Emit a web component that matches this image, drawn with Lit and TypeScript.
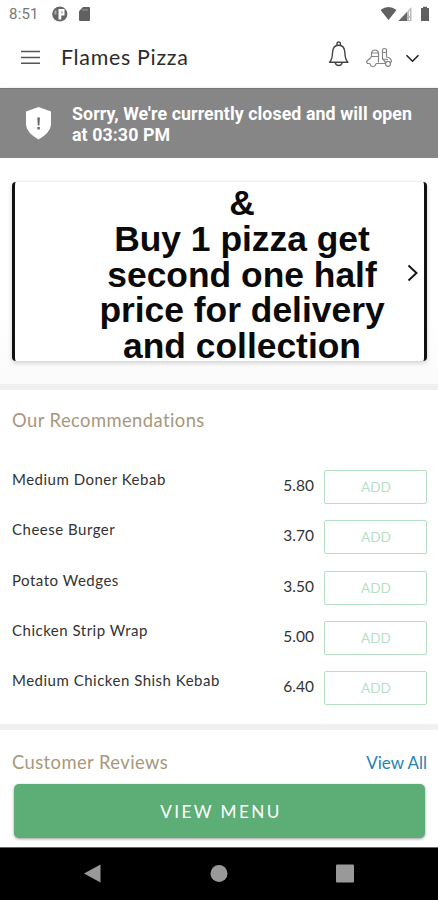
import { LitElement, html, css } from "lit";
import { customElement } from "lit/decorators.js";

const ITEMS = [
  { name: "Medium Doner Kebab", price: "5.80" },
  { name: "Cheese Burger", price: "3.70" },
  { name: "Potato Wedges", price: "3.50" },
  { name: "Chicken Strip Wrap", price: "5.00" },
  { name: "Medium Chicken Shish Kebab", price: "6.40" },
];

@customElement("app-root")
export class AppRoot extends LitElement {
  static styles = css`
    :host {
      display: flex;
      flex-direction: column;
      width: 438px;
      height: 900px;
      overflow: hidden;
      background: #fff;
      font-family: Lato, "Open Sans", sans-serif;
      color: #333;
    }
    * { box-sizing: border-box; }
    svg { display: block; flex: none; }
    .status {
      height: 28px;
      display: flex;
      align-items: center;
      padding: 0 8px 0 9px;
      flex: none;
    }
    .time {
      font: 15px/28px Roboto, sans-serif;
      color: #777;
      width: 42px;
      letter-spacing: 0.2px;
    }
    .grow { flex: 1; }
    .bar {
      height: 60px;
      flex: none;
      display: flex;
      align-items: center;
      padding: 0 18px 0 20px;
    }
    .title {
      flex: 1;
      margin-left: 20px;
      padding-bottom: 2px;
      font-size: 21.4px;
      line-height: 30px;
      letter-spacing: 0.7px;
      color: #2c2c2c;
    }
    .actions { margin-bottom: 4px; }
    .closed {
      height: 70px;
      flex: none;
      background: #868686;
      border-top: 1px solid #777;
      box-shadow: 0 1px 3px rgba(0, 0, 0, 0.25);
      display: flex;
      align-items: center;
      padding-left: 25px;
      gap: 20px;
    }
    .closed p {
      margin: 0;
      padding-top: 1px;
      font: 700 17.8px/21px Roboto, sans-serif;
      letter-spacing: 0.08px;
      color: #fff;
      white-space: nowrap;
    }
    .promo-area {
      height: 226px;
      flex: none;
      padding: 24px 11px 0 12px;
      background: linear-gradient(#fff 70%, #fbfbfb);
    }
    .promo {
      height: 179px;
      border-left: 3.5px solid #111;
      border-right: 3.5px solid #111;
      border-radius: 4px;
      background: #fff;
      box-shadow: 0 2px 5px rgba(0, 0, 0, 0.18), 0 -1px 1px rgba(0, 0, 0, 0.04);
      display: grid;
      grid-template-columns: 1fr 14px;
      align-items: center;
      padding-right: 5px;
    }
    .promo svg { margin-bottom: 1px; }
    .promo p {
      margin: 0;
      padding: 4px 0 0 64px;
      text-align: center;
      white-space: nowrap;
      font: 700 35.4px/35.75px "Liberation Sans", sans-serif;
      color: #0a0a0a;
    }
    .rule { height: 6px; flex: none; background: #f0f0f0; }
    .recs { flex: none; height: 334px; padding: 18px 11px 0 12px; }
    h2 {
      margin: 0;
      font-weight: 400;
      font-size: 18.4px;
      line-height: 24px;
      letter-spacing: 0.42px;
      color: #a8987a;
    }
    .list { padding-top: 38px; }
    .row { height: 50.3px; display: flex; }
    .name {
      flex: 1;
      font-size: 15px;
      line-height: 18px;
      letter-spacing: 0.5px;
    }
    .price {
      font-size: 15.5px;
      line-height: 31px;
      margin-right: 10px;
    }
    .add {
      width: 103px;
      height: 34px;
      border: 1.4px solid #b5dec2;
      border-radius: 2px;
      background: #fff;
      color: #b8dfc5;
      text-align: center;
      font: 13.6px/32px Lato, sans-serif;
      padding: 0 0 0 1px;
    }
    .reviews {
      flex: none;
      height: 54px;
      padding: 20px 11px 0 12px;
      display: flex;
      justify-content: space-between;
    }
    .all { font-size: 17px; line-height: 25px; color: #2484b8; }
    .cta {
      flex: none;
      width: 411px;
      height: 54px;
      margin-left: 14px;
      padding: 1px 0 0 3px;
      border: 0;
      border-radius: 5px;
      background: #5dae76;
      box-shadow: 0 1px 3px rgba(0, 0, 0, 0.4);
      color: #fff;
      font: 17.2px/53px Lato, sans-serif;
      letter-spacing: 2.4px;
    }
    .nav {
      flex: none;
      margin-top: 9px;
      height: 53px;
      background: #000;
      border-top: 1px solid #666;
      display: flex;
      justify-content: space-between;
      padding: 16px 84px 0 83px;
    }
  `;

  render() {
    return html`
      <div class="status">
        <span class="time">8:51</span>
        <svg width="40" height="16" viewBox="0 0 40 16">
          <circle cx="8.8" cy="8" r="7.6" fill="#666" />
          <path d="M7.5 3H13.5V9.5H10.3V13.5H7.5Z" fill="#fff" />
          <path d="M10.2 5.2h1.5v2.2h-1.5zM3.5 4.5h2v4h-2z" fill="#aaa" />
          <path d="M28 5.2L32 1h6q1 0 1 1v12q0 1-1 1h-9q-1 0-1-1z" fill="#606060" />
          <path d="M32 3v2M34 3v2M36 3v2" stroke="#999" />
        </svg>
        <span class="grow"></span>
        <svg width="50" height="16" viewBox="0 0 50 16">
          <path d="M.5 4Q8.5-2 16.5 4L8.5 14Z" fill="#606060" />
          <path d="M18.5 15L31.5 1V15Z" fill="#bbb" />
          <path d="M18.5 15L27 6V15Z" fill="#666" />
          <path d="M29.5 5v5M29.5 12v2" stroke="#fff" />
          <path d="M41 2h2V.8h4V2h2v13h-8z" fill="#606060" />
        </svg>
      </div>

      <div class="bar">
        <svg width="21" height="16" viewBox="0 0 21 16" stroke="#555" stroke-width="1.4">
          <path d="M1 1.5h19M1 7.5h19M1 13.2h19" />
        </svg>
        <span class="title">Flames Pizza</span>
        <svg class="actions" width="92" height="32" viewBox="0 0 92 32" fill="none">
          <g stroke="#444" stroke-width="1.4" stroke-linejoin="round">
            <path d="M1.5 22.2Q4.3 19.5 4.5 13Q4.7 5.2 10.7 5.2T16.9 13Q17.1 19.5 19.9 22.2Z" />
            <path d="M9 5V3Q10.7 .8 12.4 3V5" />
            <path d="M7.2 22.7Q7.8 25.5 10.7 25.5T14.2 22.7" />
          </g>
          <g stroke="#858585" stroke-width="1.2" stroke-linejoin="round">
            <path d="M43.5 17V13Q44 10 47 10T50.5 13V22.5M43.5 13H50.5M43.5 16.5H50.5" />
            <path d="M43.5 16.5Q42.5 18.5 39.5 20.5Q38 22 39.5 23.5H42M48 23.5H57.5Q57 20.5 54.5 19V10Q54.5 8.5 56.5 8.5T58.5 10V17Q63.5 18 63.5 21.5L62 23.5" />
            <path d="M42 23.5Q42.5 26.5 45 26.5T48 23.5" />
            <circle cx="60" cy="23.8" r="2.5" />
            <path d="M54.5 12.5h4M54.5 19l5.5 .5" />
          </g>
          <path d="M78.5 15.2l6 6 6-6" stroke="#222" stroke-width="1.6" />
        </svg>
      </div>

      <div class="closed">
        <svg width="27" height="34" viewBox="0 0 27 34">
          <path d="M13.5 0L26 4.5V18Q25 26 13.5 32.5Q2 26 1 18V4.5Z" fill="#fff" />
          <path d="M12.3 10.5h2.6l-.5 8h-1.6zM12.4 20h2.4v2.5h-2.4z" fill="#666" />
        </svg>
        <p>Sorry, We're currently closed and will open<br />at 03:30 PM</p>
      </div>

      <div class="promo-area">
        <div class="promo">
          <p>&amp;<br />Buy 1 pizza get<br />second one half<br />price for delivery<br />and collection</p>
          <svg width="14" height="18" viewBox="0 0 14 18">
            <path d="M3.5 1.5l8 7.5-8 7.5" fill="none" stroke="#111" stroke-width="1.9" />
          </svg>
        </div>
      </div>

      <div class="rule"></div>
      <div class="recs">
        <h2>Our Recommendations</h2>
        <div class="list">
          ${ITEMS.map(
            (i) => html`<div class="row">
              <span class="name">${i.name}</span>
              <span class="price">${i.price}</span>
              <button class="add">ADD</button>
            </div>`
          )}
        </div>
      </div>
      <div class="rule"></div>
      <div class="reviews">
        <h2>Customer Reviews</h2>
        <span class="all">View All</span>
      </div>
      <button class="cta">VIEW MENU</button>

      <div class="nav">
        <svg width="19" height="19" viewBox="0 0 19 19"><path d="M1 9.5L17.5.5v18z" fill="#999" /></svg>
        <svg width="18" height="19" viewBox="0 0 18 19"><circle cx="9" cy="9.5" r="8.5" fill="#999" /></svg>
        <svg width="18" height="19" viewBox="0 0 18 19"><rect y=".5" width="18" height="18" rx="1" fill="#999" /></svg>
      </div>
    `;
  }
}
